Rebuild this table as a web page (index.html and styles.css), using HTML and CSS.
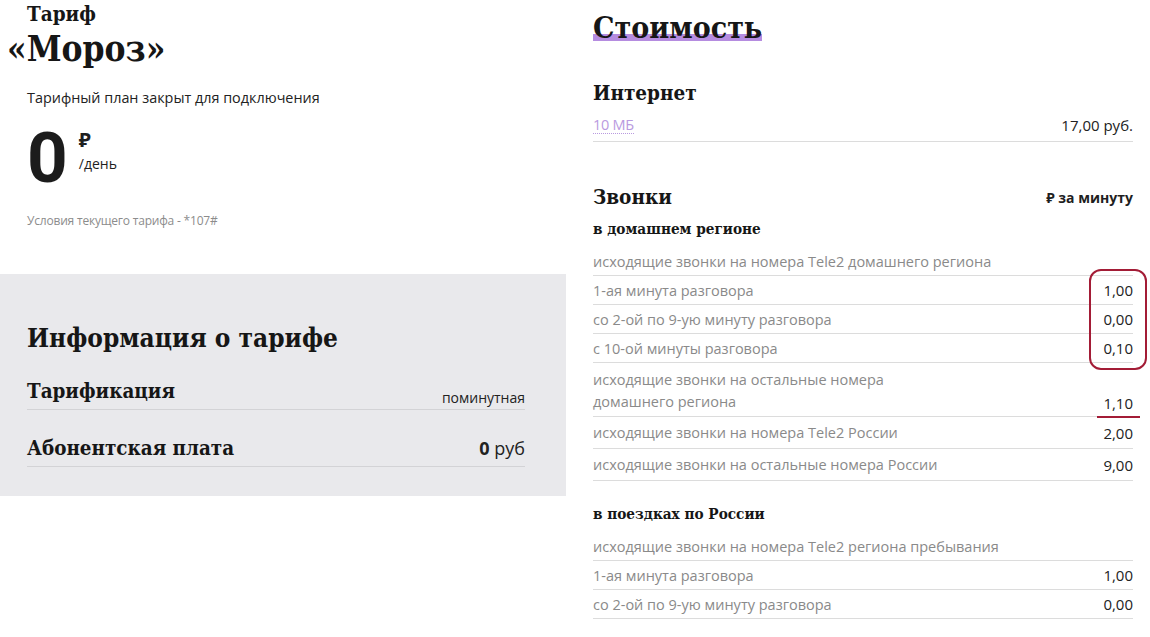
FILE: index.html
```html
<!DOCTYPE html>
<html lang="ru">
<head>
<meta charset="utf-8">
<link rel="stylesheet" href="styles.css">
</head>
<body>
<div class="page">
  <div class="left">
    <div class="hero">
      <div class="kicker">Тариф</div>
      <h1 class="title">«Мороз»</h1>
      <div class="closed">Тарифный план закрыт для подключения</div>
      <div class="price">
        <span class="price-num">0</span>
        <span class="price-unit"><span class="rub">₽</span><span class="per">/день</span></span>
      </div>
      <div class="terms">Условия текущего тарифа - *107#</div>
    </div>
    <div class="info">
      <h2 class="info-title">Информация о тарифе</h2>
      <div class="info-row first">
        <span class="info-name">Тарификация</span>
        <span class="info-val small">поминутная</span>
      </div>
      <div class="info-row second">
        <span class="info-name">Абонентская плата</span>
        <span class="info-val"><b>0</b> руб</span>
      </div>
    </div>
  </div>
  <div class="right">
    <h2 class="cost"><span class="hl">Стоимость</span></h2>
    <h3 class="sec">Интернет</h3>
    <div class="row inet">
      <span class="link">10 МБ</span>
      <span class="val">17,00 руб.</span>
    </div>
    <div class="sec-line">
      <h3 class="sec">Звонки</h3>
      <span class="per-min">₽ за минуту</span>
    </div>
    <h4 class="sub">в домашнем регионе</h4>
    <div class="row"><span class="lbl">исходящие звонки на номера Tele2 домашнего региона</span></div>
    <div class="marked">
      <div class="row"><span class="lbl">1-ая минута разговора</span><span class="val">1,00</span></div>
      <div class="row"><span class="lbl">со 2-ой по 9-ую минуту разговора</span><span class="val">0,00</span></div>
      <div class="row"><span class="lbl">с 10-ой минуты разговора</span><span class="val">0,10</span></div>
      <div class="ring"></div>
    </div>
    <div class="row two"><span class="lbl">исходящие звонки на остальные номера<br>домашнего региона</span><span class="val underlined">1,10</span></div>
    <div class="row tall"><span class="lbl">исходящие звонки на номера Tele2 России</span><span class="val">2,00</span></div>
    <div class="row tall"><span class="lbl">исходящие звонки на остальные номера России</span><span class="val">9,00</span></div>
    <h4 class="sub trip">в поездках по России</h4>
    <div class="row"><span class="lbl">исходящие звонки на номера Tele2 региона пребывания</span></div>
    <div class="row"><span class="lbl">1-ая минута разговора</span><span class="val">1,00</span></div>
    <div class="row"><span class="lbl">со 2-ой по 9-ую минуту разговора</span><span class="val">0,00</span></div>
  </div>
</div>
</body>
</html>
```

FILE: styles.css
```css
html, body {
  margin: 0;
  padding: 0;
  background: #fff;
}
body {
  font-family: "Open Sans", "Noto Sans", sans-serif;
  color: #1f1f1f;
  overflow: hidden;
}
.page {
  display: flex;
  width: 1150px;
  height: 637px;
}
.kicker, .title, .info-title, .info-name, .cost, .sec, .sub {
  font-family: "DejaVu Serif Condensed", "DejaVu Serif", serif;
  font-stretch: condensed;
  font-weight: bold;
  color: #161616;
}
.left {
  width: 566px;
  flex: none;
}
.hero {
  padding: 0 27px;
  height: 273px;
  box-sizing: border-box;
}
.kicker {
  font-size: 20.5px;
  line-height: 26px;
  margin-top: 1px;
}
.title {
  font-size: 35px;
  line-height: 44px;
  margin: 0 0 0 -20px;
}
.closed {
  font-size: 14.4px;
  line-height: 20px;
  margin-top: 17px;
  color: #222;
}
.price {
  display: flex;
  align-items: flex-start;
  margin-top: 15px;
  height: 70px;
  margin-bottom: 1px;
}
.price-num {
  font-family: Roboto, sans-serif;
  font-weight: 700;
  font-size: 71px;
  line-height: 70px;
  color: #1c1c1c;
}
.price-unit {
  display: flex;
  flex-direction: column;
  margin-left: 11px;
  padding-top: 7px;
}
.rub {
  font-size: 20px;
  font-weight: 700;
  line-height: 20px;
}
.per {
  font-size: 14px;
  line-height: 20px;
  margin-top: 4px;
}
.terms {
  font-size: 12px;
  color: #8c8c8c;
  margin-top: 19px;
  line-height: 18px;
  letter-spacing: -0.2px;
}
.info {
  background: #e9e9ec;
  height: 222px;
  padding: 48px 41px 0 27px;
  box-sizing: border-box;
}
.info-title {
  font-size: 26px;
  line-height: 32px;
  margin: 0 0 9px;
}
.info-row {
  display: flex;
  justify-content: space-between;
  align-items: flex-end;
  border-bottom: 1px solid #d3d3d6;
  box-sizing: border-box;
}
.info-row.first {
  height: 47px;
}
.info-row.first .info-name {
  margin-bottom: 5px;
}
.info-row.first .info-val {
  margin-bottom: 1px;
}
.info-row.second {
  height: 57px;
  padding-bottom: 5px;
}
.info-name {
  font-size: 20.4px;
  line-height: 26px;
}
.info-val {
  font-size: 18px;
  line-height: 26px;
  color: #222;
}
.info-val b {
  font-weight: 700;
}
.info-val.small {
  font-size: 14px;
  line-height: 20px;
}
.right {
  flex: 1;
  padding: 0 17px 0 27px;
}
.cost {
  margin: 9px 0 0;
  font-size: 30px;
  line-height: 38px;
}
.hl {
  background: linear-gradient(to bottom, transparent 68%, #b58ce0 68%, #b58ce0 90%, transparent 90%);
}
.sec {
  font-size: 20.5px;
  line-height: 26px;
  margin: 0;
}
.cost + .sec {
  margin-top: 33px;
}
.row {
  display: flex;
  justify-content: space-between;
  align-items: center;
  border-bottom: 1px solid #dcdcdc;
  height: 29px;
  box-sizing: border-box;
  font-size: 14.5px;
}
.lbl {
  color: #8a8a8a;
}
.val {
  color: #222;
  font-size: 15px;
}
.inet {
  height: 36px;
  padding-top: 3px;
}
.link {
  color: #b99ae0;
  font-size: 14.5px;
  border-bottom: 1px dotted #b99ae0;
  line-height: 17px;
  letter-spacing: -0.3px;
}
.sec-line {
  display: flex;
  justify-content: space-between;
  align-items: center;
  margin-top: 42px;
}
.per-min {
  font-size: 14px;
  font-weight: 700;
}
.sub {
  font-size: 15.2px;
  line-height: 20px;
  margin: 9px 0 8px;
}
.sub.trip {
  margin-top: 23px;
}
.marked {
  position: relative;
}
.ring {
  position: absolute;
  right: -14px;
  top: -7px;
  width: 54px;
  height: 97px;
  border: 2px solid #a31c36;
  border-radius: 12px;
}
.two {
  height: 54px;
  align-items: flex-end;
  padding-bottom: 3px;
}
.two .lbl {
  line-height: 22px;
}
.underlined {
  position: relative;
}
.underlined::after {
  content: "";
  position: absolute;
  left: -6px;
  right: -7px;
  bottom: -5px;
  height: 2px;
  background: #a31c36;
}
.tall {
  height: 32px;
}
```
